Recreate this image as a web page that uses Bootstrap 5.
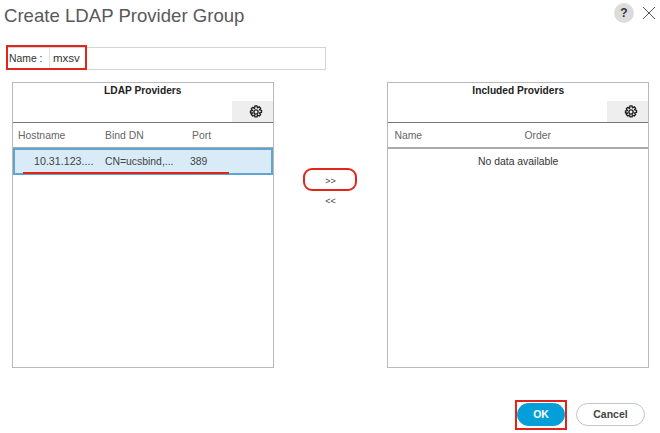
<!DOCTYPE html>
<html lang="en">
  <head>
    <meta charset="UTF-8" />
    <title>Create LDAP Provider Group</title>
    <link
      href="https://cdn.jsdelivr.net/npm/bootstrap@5.3.3/dist/css/bootstrap.min.css"
      rel="stylesheet"
    />
    <style>
      html, body { height: 433px; overflow: hidden; }
      body { background: #fff; font-family: "Liberation Sans", Arial, sans-serif; color: #222; font-size: 10.4px; position: relative; }
      .dlg-head { height: 47px; padding: 2px 4px 0 4px; }
      .dlg-title { font-size: 18.6px; line-height: 28px; color: #58595b; margin: 0; font-weight: 400; }
      .help-dot { width: 20px; height: 20px; border-radius: 50%; background: #dcdcdc; font-size: 12px; font-weight: 700; line-height: 20px; text-align: center; color: #333; }
      .top-tools { padding-top: 1px; }
      .name-row { height: 23px; margin: 0 334px 0 6px; border: 1px solid #d4d4d4; }
      .name-label { width: 43px; padding-left: 2px; line-height: 21px; border-right: 1px solid #e2e2e2; color: #333; }
      .name-value { padding-left: 3px; line-height: 21px; font-size: 11.5px; color: #333; }
      .panes { padding: 12px 11px 0 12px; height: 298px; }
      .pane { width: 262px; height: 286px; border: 1px solid #b9b9b9; }
      .pane-title { height: 18px; line-height: 15px; font-weight: 700; font-size: 10.2px; text-align: center; color: #222; }
      .pane-tools { height: 22px; border-bottom: 1px solid #777; }
      .gear-box { width: 41px; background: #eee; padding-left: 7px; }
      .col-heads { height: 26px; border-bottom: 2px solid #aaa; color: #666; line-height: 25px; }
      .sel-row { height: 27px; background: #d9ebf6; border: 2px solid #5ea6d0; margin-top: -1px; color: #444; line-height: 23px; }
      .cell-host { width: 92px; padding-left: 5px; }
      .cell-bind { width: 87px; }
      .cell-sel-host { width: 90px; padding-left: 19px; font-size: 10.7px; }
      .cell-sel-bind { width: 85px; }
      .cell-inc-name { width: 136px; padding-left: 6px; }
      .empty-note { text-align: center; line-height: 25px; color: #333; }
      .mover { width: 114px; padding-top: 89px; text-align: center; font-size: 9px; color: #444; }
      .mover div { height: 20px; line-height: 20px; }
      .dlg-foot { padding: 35px 15px 0 0; }
      .btn-ok, .btn-cancel { height: 23px; padding: 0; font-size: 10.5px; font-weight: 700; line-height: 21px; border-radius: 12px; }
      .btn-ok { width: 48px; background: #049fd9; border: 1px solid #049fd9; color: #fff; }
      .btn-cancel { width: 69px; background: #fff; border: 1px solid #c4c4c4; color: #444; margin-left: 11px; }
      .mark-box { position: absolute; border: 2px solid #e1251b; }
      .mark-name { left: 6px; top: 45px; width: 81px; height: 25px; }
      .mark-move { left: 303px; top: 168px; width: 54px; height: 23px; border-radius: 9px; }
      .mark-ok { left: 515px; top: 400px; width: 52px; height: 30px; }
      .mark-line { position: absolute; left: 23px; top: 172px; width: 206px; height: 2px; background: #e1251b; }
    </style>
  </head>
  <body>
    <div class="dlg-head d-flex justify-content-between align-items-start">
      <h1 class="dlg-title">Create LDAP Provider Group</h1>
      <div class="top-tools d-flex align-items-center gap-2">
        <div class="help-dot">?</div>
        <svg width="14" height="14" viewBox="0 0 14 14"><path d="M1 1l12 12M13 1L1 13" stroke="#555" stroke-width="1" fill="none" /></svg>
      </div>
    </div>

    <div class="name-row d-flex">
      <div class="name-label">Name :</div>
      <div class="name-value">mxsv</div>
    </div>

    <div class="panes d-flex">
      <div class="pane">
        <div class="pane-title">LDAP Providers</div>
        <div class="pane-tools d-flex justify-content-end">
          <div class="gear-box d-flex align-items-center justify-content-center">
            <svg width="14" height="14" viewBox="0 0 16 16"><circle cx="8" cy="8" r="2.4" fill="none" stroke="#222" stroke-width="1.6" /><path fill="none" stroke="#222" stroke-width="1.6" stroke-linejoin="round" d="M6.8 1h2.400l.5 2.200 1.900-1.200 1.700 1.700-1.200 1.900 2.200.5v2.400l-2.200.5 1.200 1.900-1.700 1.700-1.900-1.200-.5 2.200H6.800l-.5-2.200-1.900 1.200-1.700-1.700 1.200-1.900L1.700 9.200V6.800l2.200-.5-1.200-1.900 1.700-1.700 1.900 1.200z" /></svg>
          </div>
        </div>
        <div class="col-heads d-flex">
          <div class="cell-host">Hostname</div>
          <div class="cell-bind">Bind DN</div>
          <div>Port</div>
        </div>
        <div class="sel-row d-flex">
          <div class="cell-sel-host">10.31.123....</div>
          <div class="cell-sel-bind">CN=ucsbind,...</div>
          <div>389</div>
        </div>
      </div>

      <div class="mover">
        <div>&gt;&gt;</div>
        <div>&lt;&lt;</div>
      </div>

      <div class="pane">
        <div class="pane-title">Included Providers</div>
        <div class="pane-tools d-flex justify-content-end">
          <div class="gear-box d-flex align-items-center justify-content-center">
            <svg width="14" height="14" viewBox="0 0 16 16"><circle cx="8" cy="8" r="2.4" fill="none" stroke="#222" stroke-width="1.6" /><path fill="none" stroke="#222" stroke-width="1.6" stroke-linejoin="round" d="M6.8 1h2.400l.5 2.200 1.900-1.200 1.700 1.700-1.200 1.900 2.200.5v2.400l-2.200.5 1.200 1.900-1.700 1.700-1.900-1.200-.5 2.200H6.800l-.5-2.200-1.900 1.200-1.700-1.700 1.200-1.900L1.700 9.200V6.800l2.200-.5-1.200-1.900 1.700-1.700 1.900 1.200z" /></svg>
          </div>
        </div>
        <div class="col-heads d-flex">
          <div class="cell-inc-name">Name</div>
          <div>Order</div>
        </div>
        <div class="empty-note">No data available</div>
      </div>
    </div>

    <div class="dlg-foot d-flex justify-content-end">
      <button class="btn btn-ok">OK</button>
      <button class="btn btn-cancel">Cancel</button>
    </div>

    <div class="mark-box mark-name"></div>
    <div class="mark-box mark-move"></div>
    <div class="mark-box mark-ok"></div>
    <div class="mark-line"></div>

    <script src="https://cdn.jsdelivr.net/npm/bootstrap@5.3.3/dist/js/bootstrap.bundle.min.js"></script>
  </body>
</html>
